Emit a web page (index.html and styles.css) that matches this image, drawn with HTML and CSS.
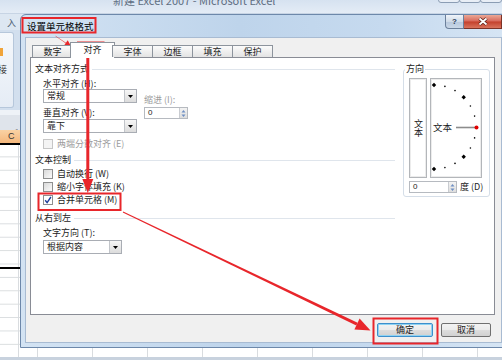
FILE: index.html
```html
<!DOCTYPE html>
<html lang="zh-CN">
<head>
<meta charset="utf-8">
<title>设置单元格格式</title>
<link rel="stylesheet" href="styles.css">
</head>
<body>
<div class="xl">
  <div class="xl-title">
    <span class="xl-caption">新建 Excel 2007 - Microsoft Excel</span>
    <div class="xl-winbtns"><i></i><i></i><i></i></div>
  </div>
  <div class="xl-tabs"><span>入</span></div>
  <div class="xl-ribbon"><div class="xl-group"><span class="xl-ico"></span><span class="xl-rtext">接</span></div></div>
  <div class="xl-fbar"><span class="xl-fx">f</span></div>
  <div class="xl-colhdr"><span>C</span></div>
  <div class="xl-grid"><div class="xl-merge"></div></div>
  <div class="xl-sheets"></div>
</div>

<div class="dlg">
  <div class="dlg-title">
    <span class="dlg-caption">设置单元格格式</span>
    <div class="capbtns">
      <span class="cap-help">?</span>
      <span class="cap-close"><svg width="12" height="9" viewBox="0 0 12 9"><path d="M2.5 1.5L9.5 7.5M9.5 1.5L2.5 7.5" stroke="#5a2016" stroke-width="3.4" fill="none"/><path d="M2.5 1.5L9.5 7.5M9.5 1.5L2.5 7.5" stroke="#fff" stroke-width="1.8" fill="none"/></svg></span>
    </div>
  </div>
  <div class="dlg-body">
    <div class="tabs">
      <span class="tab">数字</span>
      <span class="tab on">对齐</span>
      <span class="tab">字体</span>
      <span class="tab">边框</span>
      <span class="tab">填充</span>
      <span class="tab">保护</span>
    </div>
    <div class="panel">
      <div class="col-left">
        <div class="sec">文本对齐方式</div>
        <div class="indent">
          <div class="ag">
            <div class="ag-left">
              <div class="lbl">水平对齐 (H):</div>
              <div class="sel w94"><span>常规</span><i class="dd"><svg width="5" height="3" viewBox="0 0 5 3"><path d="M0 0H5L2.5 3Z" fill="#000"/></svg></i></div>
              <div class="lbl mt5">垂直对齐 (V):</div>
              <div class="sel w94 mt1"><span>靠下</span><i class="dd"><svg width="5" height="3" viewBox="0 0 5 3"><path d="M0 0H5L2.5 3Z" fill="#000"/></svg></i></div>
            </div>
            <div class="ag-right">
              <div class="lbl dis">缩进 (I):</div>
              <div class="spin w44 mt2"><span>0</span><i class="sp"><svg width="5" height="9" viewBox="0 0 5 9"><path d="M2.5 1L4.5 3.5H0.5Z M2.5 8L4.5 5.5H0.5Z" fill="#6f8fc4"/></svg></i></div>
            </div>
          </div>
          <div class="chk dis mt6"><i class="box"></i>两端分散对齐 (E)</div>
        </div>
        <div class="sec mt6">文本控制</div>
        <div class="indent">
          <div class="chk mt4"><i class="box"></i>自动换行 (W)</div>
          <div class="chk mt3"><i class="box"></i>缩小字体填充 (K)</div>
          <div class="chk mt3"><i class="box on"><svg width="8" height="8" viewBox="0 0 8 8"><path d="M1.2 4.3L3.1 6.6L6.9 1" fill="none" stroke="#1d3d99" stroke-width="1.4"/></svg></i>合并单元格 (M)</div>
        </div>
        <div class="sec mt8">从右到左</div>
        <div class="indent">
          <div class="lbl mt5">文字方向 (T):</div>
          <div class="sel w79 mt2"><span>根据内容</span><i class="dd"><svg width="5" height="3" viewBox="0 0 5 3"><path d="M0 0H5L2.5 3Z" fill="#000"/></svg></i></div>
        </div>
      </div>
      <fieldset class="orient">
        <legend>方向</legend>
        <div class="orient-row">
          <div class="vbox"><span class="vtext">文本</span></div>
          <div class="dial">
            <svg width="50" height="98" viewBox="0 0 50 98">
              <g fill="#000">
                <path d="M3 3.8L5.2 6L3 8.2L0.8 6Z"/>
                <path d="M32.7 16.1L34.9 18.3L32.7 20.5L30.5 18.3Z"/>
                <path d="M32.7 75.5L34.9 77.7L32.7 79.9L30.5 77.7Z"/>
                <path d="M3 87.8L5.2 90L3 92.2L0.8 90Z"/>
                <circle cx="13.9" cy="7.4" r="0.8"/>
                <circle cx="24" cy="11.6" r="0.8"/>
                <circle cx="39.4" cy="27" r="0.8"/>
                <circle cx="43.6" cy="37.1" r="0.8"/>
                <circle cx="43.6" cy="58.9" r="0.8"/>
                <circle cx="39.4" cy="69" r="0.8"/>
                <circle cx="24" cy="84.4" r="0.8"/>
                <circle cx="13.9" cy="88.6" r="0.8"/>
              </g>
              <line x1="25" y1="48.5" x2="44" y2="48.5" stroke="#8c8c8c" stroke-width="1.6"/>
              <circle cx="45.5" cy="48.5" r="2" fill="#e00000"/>
              <text x="2" y="52" class="dial-text">文本</text>
            </svg>
          </div>
        </div>
        <div class="deg-row">
          <div class="spin w48"><span>0</span><i class="sp"><svg width="5" height="9" viewBox="0 0 5 9"><path d="M2.5 1L4.5 3.5H0.5Z M2.5 8L4.5 5.5H0.5Z" fill="#6f8fc4"/></svg></i></div>
          <span>度 (D)</span>
        </div>
      </fieldset>
    </div>
    <div class="btns">
      <span class="btn ok">确定</span>
      <span class="btn cancel">取消</span>
    </div>
  </div>
</div>

<svg class="annot" width="502" height="360" viewBox="0 0 502 360">
  <g fill="none" stroke="#e8262b" stroke-width="2">
    <rect x="22.5" y="18" width="73" height="14.5"/>
    <rect x="78" y="42.5" width="25.5" height="13.5"/>
    <rect x="38.5" y="193.5" width="82" height="16.5"/>
    <rect x="373.5" y="318.5" width="64" height="25"/>
  </g>
  <g fill="#e8262b">
    <path d="M55 35.4L55.9 36.6L66.4 43.7L65.5 42.4Z"/>
    <path d="M71.5 47L63.7 45.9L67.7 40.2Z"/>
    <rect x="86.3" y="57" width="3" height="124"/>
    <path d="M82.3 179L93.3 179L87.8 193Z"/>
    <path d="M122.8 212.4L123.2 211.6L357.6 322.7L356.3 325.4Z"/>
    <path d="M370.5 330.5L354.4 329.4L359.6 318.6Z"/>
  </g>
</svg>
</body>
</html>
```

FILE: styles.css
```css
* { box-sizing: border-box; margin: 0; padding: 0; }
html, body { width: 502px; height: 360px; overflow: hidden; }
body {
  position: relative;
  background: #fff;
  font-family: "Noto Sans CJK SC", "Liberation Sans", sans-serif;
}

/* ---------- Excel window behind ---------- */
.xl { display: flex; flex-direction: column; height: 360px; }
.xl-title {
  height: 14px;
  display: flex;
  align-items: flex-start;
  overflow: hidden;
  background: linear-gradient(#d6e2f0, #e4ecf6);
  border-bottom: 1px solid #c7d4e4;
}
.xl-caption {
  margin: -6px 0 0 113px;
  font-size: 11px;
  line-height: 13px;
  color: #5f6e82;
  white-space: nowrap;
}
.xl-winbtns { margin-left: auto; display: flex; margin-top: -10px; }
.xl-winbtns i {
  display: block;
  width: 22px;
  height: 13px;
  margin-left: -1px;
  border: 1px solid #8b9db4;
  border-radius: 0 0 3px 3px;
  background: #e8eef6;
}
.xl-tabs {
  height: 16px;
  padding: 4px 0 0 7px;
  font-size: 9px;
  line-height: 9px;
  color: #4b5b71;
  background: #dde7f2;
}
.xl-ribbon { height: 80px; padding: 2px 0; background: #d2dfee; }
.xl-group {
  width: 14px;
  height: 76px;
  display: flex;
  flex-direction: column;
  background: linear-gradient(#f5f8fc, #e5ecf5);
  border: 1px solid #b6c7db;
  border-left: none;
  border-radius: 0 3px 3px 0;
}
.xl-ico { width: 3px; height: 8px; margin-top: 15px; background: #f0a43a; }
.xl-rtext { margin: 9px 0 0 -2px; font-size: 9px; line-height: 10px; color: #333; }
.xl-fbar {
  height: 20px;
  padding: 6px 0 0 14px;
  background: linear-gradient(#eef2f7 0 5px, #dfe4eb 5px);
}
.xl-fx { font: italic 9px/10px "Liberation Serif", serif; color: #333; }
.xl-colhdr {
  height: 13px;
  padding-left: 8px;
  font: 9px/13px "Liberation Sans", sans-serif;
  color: #333;
  background: linear-gradient(#f9d2a4, #f4b77c);
}
.xl-grid {
  flex: 1;
  background:
    linear-gradient(90deg, #d9dcdf 0 1px, transparent 1px) 37px 0 / 55px 100% repeat-x,
    linear-gradient(90deg, #d9dcdf 0 1px, transparent 1px) 18px 0 / 1px 100% no-repeat,
    linear-gradient(#dadddf 0 1px, transparent 1px) 0 0 / 100% 13.4px,
    #fff;
}
.xl-merge { width: 40px; height: 126px; border-top: 2px solid #000; border-bottom: 2px solid #000; }
.xl-sheets { height: 3px; background: #c8d2de; }

/* ---------- Dialog ---------- */
.dlg {
  position: absolute;
  left: 20px;
  top: 14px;
  width: 487px;
  height: 334px;
  display: flex;
  flex-direction: column;
  padding: 0 4px 4px;
  border: 1px solid #6d88aa;
  border-radius: 6px 6px 0 0;
  background: linear-gradient(90deg, #d3e3f3 0%, #bed4eb 45%, #c6daef 75%, #d6e5f4 100%);
  font: 9px/10px "Noto Sans CJK SC", "Liberation Sans", sans-serif;
  color: #1c1c1c;
}
.dlg-title { height: 22px; display: flex; align-items: flex-start; }
.dlg-caption { margin: 5px 0 0 2px; font-size: 9.5px; line-height: 12px; color: #000; }
.capbtns { margin-left: auto; display: flex; height: 14px; }
.cap-help {
  width: 19px;
  height: 14px;
  border: 1px solid #6b7f9a;
  border-top: none;
  border-radius: 0 0 0 4px;
  background: linear-gradient(#f0f4f9, #cfdbe8 50%, #b7c8dc 52%, #c9d7e7);
  font: bold 8px/13px "Liberation Sans", sans-serif;
  text-align: center;
  color: #2c3d55;
}
.cap-close {
  width: 38px;
  height: 14px;
  display: flex;
  align-items: center;
  justify-content: center;
  border: 1px solid #7c3328;
  border-top: none;
  border-left: none;
  background: linear-gradient(#eba896, #d7685a 48%, #c3402c 52%, #d9735c);
}
.dlg-body {
  flex: 1;
  display: flex;
  flex-direction: column;
  padding: 4px 6px 5px 4px;
  background: #f0f0f0;
  border: 1px solid #a8bbd2;
}

/* tabs */
.tabs { position: relative; z-index: 1; display: flex; align-items: flex-end; height: 15px; padding-left: 2px; }
.tab {
  width: 41px;
  height: 12px;
  margin-left: -1px;
  border: 1px solid #8d949d;
  border-bottom: none;
  background: linear-gradient(#fbfbfb, #e3e3e3);
  text-align: center;
  line-height: 11px;
}
.tab:first-child { margin-left: 0; }
.tab.on {
  width: 45px;
  height: 16px;
  margin: 0 -2px -1px -3px;
  background: #fff;
  line-height: 14px;
}

/* panel */
.panel {
  height: 258px;
  display: flex;
  padding: 6px 0 0 4px;
  background: #fff;
  border: 1px solid #898c95;
}
.col-left { width: 360px; display: flex; flex-direction: column; }
.sec { display: flex; align-items: center; height: 10px; white-space: nowrap; }
.sec::after { content: ""; flex: 1; height: 1px; margin-left: 3px; background: #dfe5ec; }
.indent { display: flex; flex-direction: column; align-items: flex-start; padding-left: 8px; }
.lbl { height: 10px; white-space: nowrap; }
.dis { color: #9c9c9c; }
.ag { display: flex; gap: 7px; margin-top: 5px; }
.ag-left { display: flex; flex-direction: column; width: 94px; }
.ag-right { padding-top: 16px; }

.mt1 { margin-top: 1px; }
.mt2 { margin-top: 2px; }
.mt3 { margin-top: 3px; }
.mt4 { margin-top: 4px; }
.mt5 { margin-top: 5px; }
.mt6 { margin-top: 6px; }
.mt8 { margin-top: 8px; }

.sel {
  height: 14px;
  display: flex;
  align-items: stretch;
  background: #fff;
  border: 1px solid #a9adb4;
}
.sel > span { padding-left: 3px; line-height: 12px; }
.w94 { width: 94px; }
.w79 { width: 79px; }
.w44 { width: 44px; }
.w48 { width: 48px; }
.dd {
  margin-left: auto;
  width: 12px;
  display: flex;
  align-items: center;
  justify-content: center;
  border-left: 1px solid #c2c5ca;
  background: linear-gradient(#f6f6f6, #dcdcdc);
}
.spin {
  height: 12px;
  display: flex;
  background: #fff;
  border: 1px solid #b6bac0;
}
.spin > span { padding-left: 3px; font: 8px/10px "Liberation Sans", sans-serif; color: #222; }
.sp {
  margin-left: auto;
  width: 8px;
  display: flex;
  align-items: center;
  justify-content: center;
  border-left: 1px solid #c9ccd1;
  background: linear-gradient(#f3f3f3, #dedede);
}

.chk { display: flex; align-items: center; gap: 4px; height: 10px; white-space: nowrap; }
.box {
  width: 10px;
  height: 10px;
  display: flex;
  align-items: center;
  justify-content: center;
  border: 1px solid #8e8f8f;
  background: linear-gradient(135deg, #d9d9d9, #fbfbfb);
}
.chk.dis .box { border-color: #c6c6c6; background: #f4f4f4; }
.box.on { background: #fff; }

/* orientation */
.orient {
  margin-left: 8px;
  width: 87px;
  min-width: 0;
  align-self: flex-start;
  padding: 0 5px 3px;
  border: 1px solid #d5dee8;
  border-radius: 3px;
}
.orient legend { margin-left: -4px; padding: 0 1px; line-height: 10px; }
.orient-row { display: flex; gap: 3px; margin-top: 4px; }
.vbox {
  width: 18px;
  height: 100px;
  display: flex;
  align-items: center;
  justify-content: center;
  border: 1px solid #b3b6ba;
  box-shadow: inset 0 0 0 1px #ececec;
}
.vtext { writing-mode: vertical-rl; line-height: 10px; }
.dial { width: 52px; height: 100px; border: 1px solid #b3b6ba; box-shadow: inset 0 0 0 1px #ececec; }
.dial svg { display: block; }
.dial-text { font: 9.5px "Noto Sans CJK SC", sans-serif; fill: #1c1c1c; }
.deg-row { display: flex; align-items: center; gap: 3px; margin-top: 3px; white-space: nowrap; }

/* buttons */
.btns { display: flex; justify-content: flex-end; gap: 8px; margin-top: 8px; padding-right: 4px; }
.btn {
  height: 14px;
  border: 1px solid #707070;
  border-radius: 2px;
  background: linear-gradient(#f3f3f3 0%, #ebebeb 50%, #dddddd 51%, #d1d1d1 100%);
  text-align: center;
  line-height: 12px;
}
.btn.ok { width: 56px; border-color: #3d8fcc; box-shadow: inset 0 0 0 1px #8fd3f3; }
.btn.cancel { width: 50px; }

/* annotations */
.annot { position: absolute; left: 0; top: 0; pointer-events: none; }
```
